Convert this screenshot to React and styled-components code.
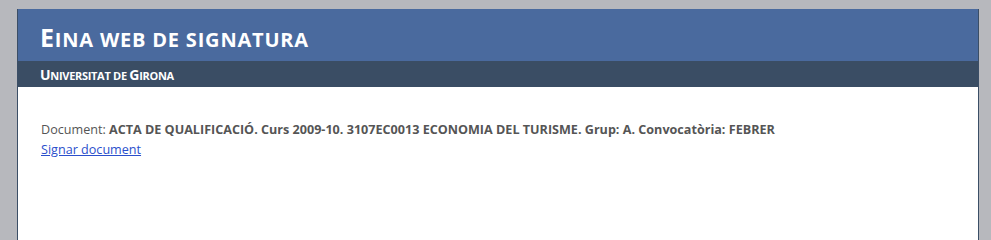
import React from 'react';
import styled, { createGlobalStyle } from 'styled-components';

const Global = createGlobalStyle`
  html, body { margin:0; padding:0; }
  body {
    background:#b7b8bd;
    font-family:"Open Sans", "Noto Sans", sans-serif;
    height:240px;
    overflow:hidden;
  }
`;

const Page = styled.div`
  margin:9px 12px 0 17px;
  width:962px;
  box-sizing:border-box;
  border-left:1px solid #3b4e66;
  border-right:1px solid #3b4e66;
  background:#fff;
  min-height:240px;
`;

const Header = styled.header`
  background:#4a6a9e;
  height:52px;
  padding:0 0 0 22px;
  box-sizing:border-box;
  display:flex;
  align-items:center;
`;

const Title = styled.h1`
  margin:0;
  padding-top:3px;
  color:#fff;
  font-size:20px;
  font-weight:700;
  text-transform:uppercase;
  letter-spacing:0.8px;
`;

const SubBar = styled.div`
  background:#3a4d64;
  height:26px;
  padding-left:22px;
  display:flex;
  align-items:center;
`;

const SubTitle = styled.h2`
  margin:0;
  color:#fff;
  font-size:11px;
  font-weight:700;
  text-transform:uppercase;
  letter-spacing:-0.3px;
`;

const Cap = styled.span`
  font-size:${p => p.$size}px;
`;

const Content = styled.section`
  padding:33px 0 0 23px;
  font-size:12.6px;
  color:#555;
  line-height:20px;
`;

const Label = styled.span`
  font-weight:400;
`;

const Strong = styled.b`
  font-weight:700;
`;

const Link = styled.a`
  color:#2b4fcc;
  text-decoration:underline;
  cursor:pointer;
`;

export default function App() {
  return (
    <>
      <Global />
      <Page>
        <Header>
          <Title><Cap $size={25}>E</Cap>ina web de signatura</Title>
        </Header>
        <SubBar>
          <SubTitle><Cap $size={14}>U</Cap>niversitat de <Cap $size={14}>G</Cap>irona</SubTitle>
        </SubBar>
        <Content>
          <div>
            <Label>Document: </Label>
            <Strong>ACTA DE QUALIFICACIÓ. Curs 2009-10. 3107EC0013 ECONOMIA DEL TURISME. Grup: A. Convocatòria: FEBRER</Strong>
          </div>
          <Link>Signar document</Link>
        </Content>
      </Page>
    </>
  );
}
